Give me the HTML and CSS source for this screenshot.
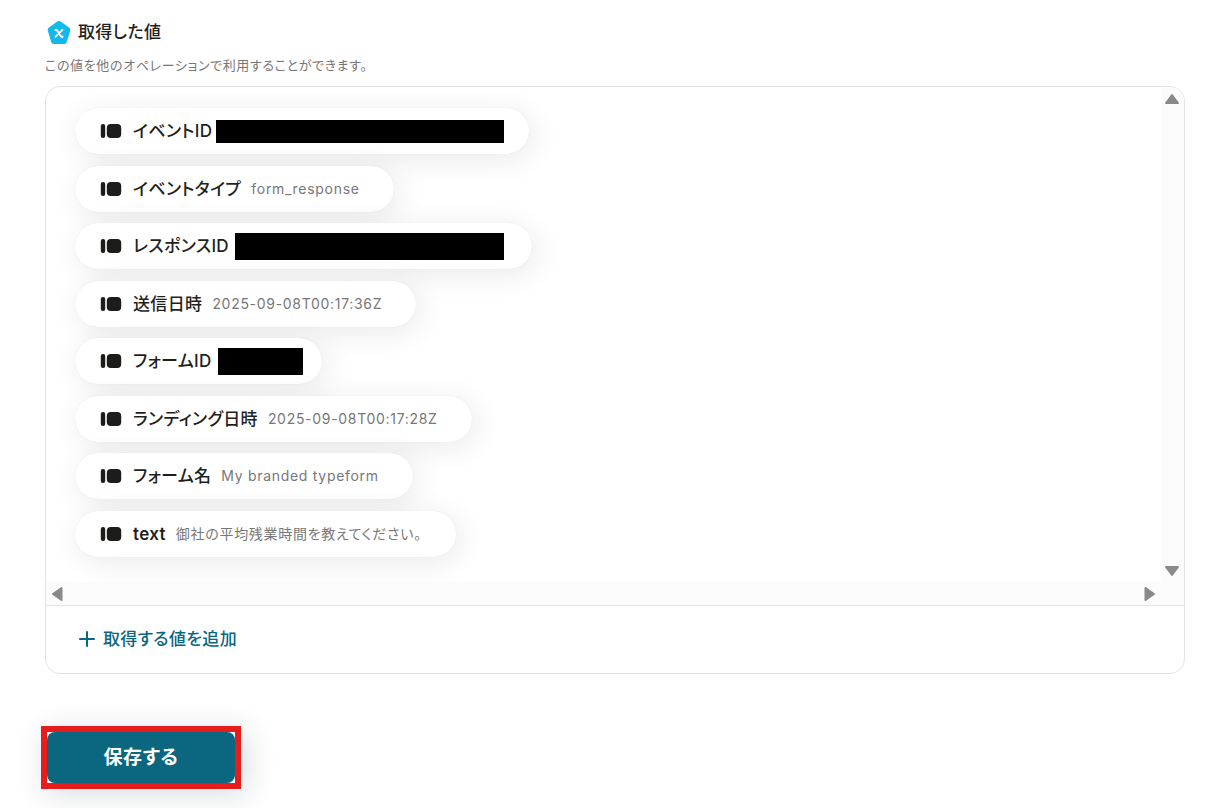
FILE: index.html
```html
<!DOCTYPE html>
<html lang="ja">
<head>
<meta charset="utf-8">
<meta name="viewport" content="width=device-width, initial-scale=1">
<title>取得した値</title>
<link rel="stylesheet" href="styles.css">
</head>
<body>
<svg class="symbols" aria-hidden="true">
  <symbol id="tag" viewBox="0 0 22 16">
    <rect x="0.8" y="1" width="4.4" height="14" rx="2"/>
    <rect x="6.8" y="1" width="14.4" height="14" rx="4"/>
  </symbol>
</svg>
<main class="page">
  <header class="heading">
    <h1 class="title">
      <svg class="title-icon" viewBox="0 0 24 24" aria-hidden="true">
        <path d="M10.300 1.600Q12 .4 13.700 1.600L22.300 7.800Q23.800 8.900 23.200 10.700L19.800 22Q19.300 23.900 17.500 23.900H6.500Q4.700 23.900 4.200 22L.8 10.700Q.2 8.900 1.700 7.800Z" fill="#13b9ec"/>
        <path d="M8.400 9.900H9.800L14.200 16.700H15.600M15.400 9.900L8.700 16.700" fill="none" stroke="#fff" stroke-width="1.900" stroke-linecap="round" stroke-linejoin="round"/>
      </svg>
      取得した値
    </h1>
    <p class="description">この値を他のオペレーションで利用することができます。</p>
  </header>

  <section class="panel">
    <div class="viewer">
      <ul class="values">
        <li class="pill pill-event"><svg class="tag"><use href="#tag"/></svg><span class="name">イベントID</span><span class="mask mask-event"></span></li>
        <li class="pill"><svg class="tag"><use href="#tag"/></svg><span class="name">イベントタイプ</span><span class="value">form_response</span></li>
        <li class="pill pill-response"><svg class="tag"><use href="#tag"/></svg><span class="name">レスポンスID</span><span class="mask mask-response"></span></li>
        <li class="pill"><svg class="tag"><use href="#tag"/></svg><span class="name">送信日時</span><span class="value">2025-09-08T00:17:36Z</span></li>
        <li class="pill pill-form"><svg class="tag"><use href="#tag"/></svg><span class="name">フォームID</span><span class="mask mask-form"></span></li>
        <li class="pill"><svg class="tag"><use href="#tag"/></svg><span class="name">ランディング日時</span><span class="value">2025-09-08T00:17:28Z</span></li>
        <li class="pill"><svg class="tag"><use href="#tag"/></svg><span class="name">フォーム名</span><span class="value">My branded typeform</span></li>
        <li class="pill"><svg class="tag"><use href="#tag"/></svg><span class="name name-latin">text</span><span class="value">御社の平均残業時間を教えてください。</span></li>
      </ul>
      <div class="track track-y" aria-hidden="true">
        <svg class="arrow" viewBox="0 0 16 12"><path d="M8 2L14 10H2Z"/></svg>
        <svg class="arrow" viewBox="0 0 16 12"><path d="M8 10L14 2H2Z"/></svg>
      </div>
      <div class="track track-x" aria-hidden="true">
        <svg class="arrow-side" viewBox="0 0 12 16"><path d="M2 8L10.500 2V14Z"/></svg>
        <svg class="arrow-side" viewBox="0 0 12 16"><path d="M10 8L1.500 2V14Z"/></svg>
      </div>
    </div>
    <div class="footer">
      <button class="add" type="button">
        <svg class="plus" viewBox="0 0 16 16" aria-hidden="true"><path d="M8 1V15M1 8H15"/></svg>
        取得する値を追加
      </button>
    </div>
  </section>

  <div class="highlight"><button class="save" type="button">保存する</button></div>
</main>
</body>
</html>
```
FILE: styles.css
```css
* { box-sizing: border-box; }
body {
  margin: 0;
  background: #fff;
  color: #1f1f1d;
  font-family: Inter, "Noto Sans CJK JP", sans-serif;
  font-feature-settings: "palt";
  letter-spacing: 0.04em;
}
button { font: inherit; letter-spacing: inherit; font-feature-settings: inherit; cursor: pointer; }
.symbols { position: absolute; width: 0; height: 0; }
.page { min-height: 100vh; padding: 20px 34px 16px 45px; }
.title {
  display: flex;
  align-items: center;
  gap: 7px;
  margin: 0;
  padding-left: 2px;
  font-size: 17px;
  line-height: 24px;
  font-weight: 500;
  letter-spacing: 0.02em;
}
.title-icon { width: 24px; height: 24px; }
.description {
  margin: 11px 0;
  color: #777;
  font-size: 13px;
  line-height: 20px;
}
.panel {
  overflow: hidden;
  border: 1px solid #e3e3e3;
  border-radius: 15px;
}
.viewer {
  display: grid;
  grid-template-columns: 1fr 23px;
  grid-template-rows: 495px 23px;
}
.values {
  display: flex;
  flex-direction: column;
  align-items: flex-start;
  justify-content: space-between;
  margin: 0;
  padding: 21px 29px 25px;
  overflow: hidden;
  list-style: none;
}
.pill {
  display: flex;
  align-items: center;
  height: 46px;
  padding: 0 34px 0 25px;
  border-radius: 23px;
  background: #fff;
  box-shadow: 4px 5px 30px rgba(0, 0, 0, 0.09), 0 0 1px rgba(0, 0, 0, 0.1);
  white-space: nowrap;
}
.tag { width: 22px; height: 16px; margin-right: 11px; fill: #1c1c1a; }
.name { font-size: 17px; line-height: 24px; font-weight: 500; letter-spacing: 0.02em; }
.name-latin { font-weight: 600; }
.value { margin-left: 10px; color: #777; font-size: 14px; line-height: 24px; letter-spacing: 0.05em; }
.mask { height: 27px; background: #000; }
.mask-event { width: 288px; height: 23px; margin-left: 4px; }
.mask-response { width: 269px; margin-left: 6px; }
.mask-form { width: 85px; margin-left: 6px; }
.pill-event { padding-right: 25px; }
.pill-response { padding-right: 28px; }
.pill-form { padding-right: 19px; }
.track { display: flex; justify-content: space-between; background: #fcfcfc; }
.track-y { flex-direction: column; align-items: flex-start; padding: 6px 3px 5px; }
.track-x { grid-column: 1 / -1; align-items: center; padding: 0 28px 0 5px; }
.arrow, .arrow-side { fill: #8a8a8a; stroke: #8a8a8a; stroke-width: 2; stroke-linejoin: round; }
.arrow { width: 16px; height: 12px; }
.arrow-side { width: 12px; height: 16px; }
.footer { padding: 21px 33px 22px; border-top: 1px solid #e3e3e3; }
.add {
  display: flex;
  align-items: center;
  gap: 8px;
  padding: 0;
  border: 0;
  background: none;
  color: #0b6780;
  font-size: 17px;
  line-height: 24px;
  font-weight: 500;
  letter-spacing: 0.02em;
}
.plus { width: 16px; height: 16px; fill: none; stroke: currentColor; stroke-width: 2; stroke-linecap: round; }
.highlight {
  width: fit-content;
  margin: 52px 0 0 -4px;
  border: 6px solid #e71c1c;
  box-shadow: 5px 5px 30px rgba(8, 40, 55, 0.16);
}
.save {
  display: block;
  width: 188px;
  padding: 14px 24px 13px;
  border: 0;
  border-radius: 8px;
  background: #0b6780;
  color: #fff;
  font-size: 19px;
  line-height: 24px;
  font-weight: 700;
}
```
